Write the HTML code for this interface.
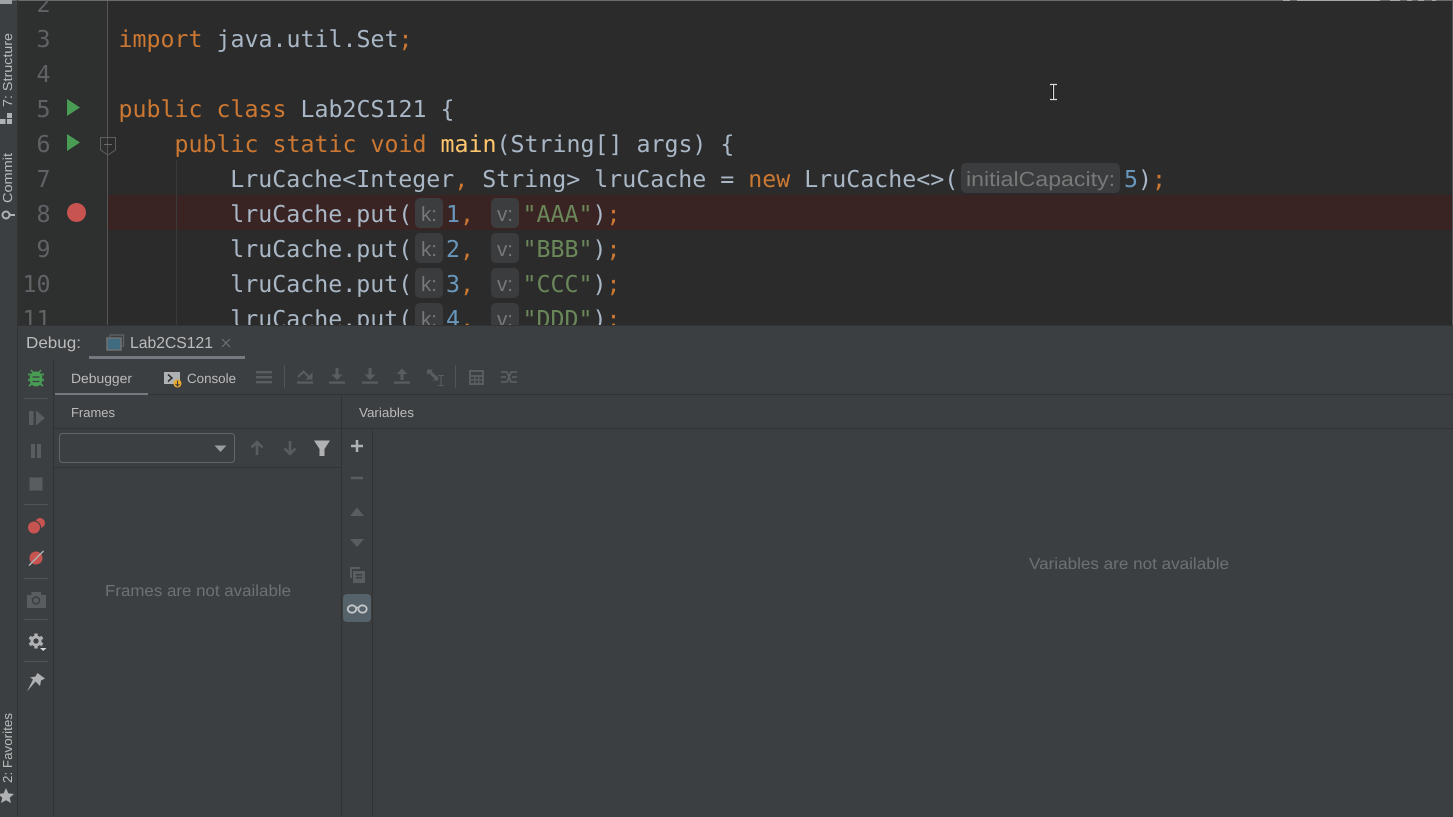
<!DOCTYPE html>
<html><head><meta charset="utf-8"><style>
html,body{margin:0;padding:0;background:#3c3f41;width:1453px;height:817px;overflow:hidden}
svg{display:block;text-rendering:geometricPrecision}
.c{font-family:"DejaVu Sans Mono","Liberation Mono",monospace;font-size:23.25px;white-space:pre}
.n{fill:#606366}.i{fill:#a9b7c6}.k{fill:#cc7832}.s{fill:#6a8759}.d{fill:#6897bb}.m{fill:#ffc66d}
.h{font-family:"Liberation Sans",sans-serif;font-size:20.5px;fill:#787878}
.u{font-family:"Liberation Sans",sans-serif;fill:#bbbbbb}
.g{fill:#5a5d5f}.a{fill:#afb1b3}
</style></head><body>
<svg width="1453" height="817" viewBox="0 0 1453 817" xmlns="http://www.w3.org/2000/svg">
<rect width="1453" height="817" fill="#3c3f41"/>
<rect x="18" y="0" width="1435" height="326" fill="#2b2b2b"/>
<rect x="18" y="0" width="89" height="326" fill="#2e2f2f"/>
<rect x="107" y="195" width="1346" height="35" fill="#3a2323"/>
<rect x="107" y="0" width="1" height="326" fill="#555555"/>
<rect x="176" y="160" width="1" height="166" fill="#3b3b3b"/>
<rect x="18" y="0" width="1" height="326" fill="#323232"/>
<rect x="0" y="0" width="1453" height="1" fill="#6b6b6b"/>
<path d="M1283 0.500H1290M1297 0.500H1380M1390 0.500H1400M1407 0.500H1412M1418 0.500H1424M1432 0.500H1436" stroke="#a8a8a8" stroke-width="1"/>
<rect x="1452" y="0" width="1" height="326" fill="#555"/>
<rect x="0" y="0" width="12" height="4" fill="#a0a2a4"/>

<g class="c n" text-anchor="end">
<text x="50.500" y="12">2</text><text x="50.500" y="47">3</text><text x="50.500" y="82">4</text><text x="50.500" y="117">5</text><text x="50.500" y="152">6</text><text x="50.500" y="187">7</text><text x="50.500" y="222">8</text><text x="50.500" y="257">9</text><text x="50.500" y="292">10</text><text x="50.500" y="327">11</text>
</g>

<path d="M67 99L80 107.500L67 116Z" fill="#499c54"/>
<path d="M67 134L80 142.500L67 151Z" fill="#499c54"/>
<circle cx="76.500" cy="212.500" r="9.500" fill="#c75450"/>
<path d="M100.500 137.500H115.500V150L108 155L100.500 150Z" fill="none" stroke="#5f5f5f" stroke-width="1"/>
<path d="M104 144.500H112" stroke="#6a6a6a" stroke-width="1"/>

<text class="c" x="118.500" y="47" xml:space="preserve"><tspan class="k">import</tspan><tspan class="i"> java.util.Set</tspan><tspan class="k">;</tspan></text>
<text class="c" x="118.500" y="117" xml:space="preserve"><tspan class="k">public class</tspan><tspan class="i"> Lab2CS121 {</tspan></text>
<text class="c" x="174.500" y="152" xml:space="preserve"><tspan class="k">public static void</tspan><tspan class="i"> </tspan><tspan class="m">main</tspan><tspan class="i">(String[] args) {</tspan></text>
<text class="c" x="230.300" y="187" xml:space="preserve"><tspan class="i">LruCache&lt;Integer</tspan><tspan class="k">,</tspan><tspan class="i"> String&gt; lruCache = </tspan><tspan class="k">new</tspan><tspan class="i"> LruCache&lt;&gt;(</tspan></text>
<rect x="961" y="163" width="159" height="30" rx="5" fill="#3a3c3d"/>
<text class="h" x="966" y="186" textLength="149" lengthAdjust="spacingAndGlyphs">initialCapacity:</text>
<text class="c" x="1124" y="187" xml:space="preserve"><tspan class="d">5</tspan><tspan class="i">)</tspan><tspan class="k">;</tspan></text>

<g>
<text class="c i" x="230.300" y="222">lruCache.put(</text>
<rect x="415" y="198" width="28" height="30" rx="5" fill="#3c3d3f"/>
<text class="h" x="421" y="221" textLength="16" lengthAdjust="spacingAndGlyphs">k:</text>
<text class="c" x="446" y="222" xml:space="preserve"><tspan class="d">1</tspan><tspan class="k">,</tspan></text>
<rect x="491" y="198" width="28" height="30" rx="5" fill="#3c3d3f"/>
<text class="h" x="497" y="221" textLength="16" lengthAdjust="spacingAndGlyphs">v:</text>
<text class="c" x="522.500" y="222" xml:space="preserve"><tspan class="s">"AAA"</tspan><tspan class="i">)</tspan><tspan class="k">;</tspan></text>
</g>
<g>
<text class="c i" x="230.300" y="257">lruCache.put(</text>
<rect x="415" y="233" width="28" height="30" rx="5" fill="#3a3c3d"/>
<text class="h" x="421" y="256" textLength="16" lengthAdjust="spacingAndGlyphs">k:</text>
<text class="c" x="446" y="257" xml:space="preserve"><tspan class="d">2</tspan><tspan class="k">,</tspan></text>
<rect x="491" y="233" width="28" height="30" rx="5" fill="#3a3c3d"/>
<text class="h" x="497" y="256" textLength="16" lengthAdjust="spacingAndGlyphs">v:</text>
<text class="c" x="522.500" y="257" xml:space="preserve"><tspan class="s">"BBB"</tspan><tspan class="i">)</tspan><tspan class="k">;</tspan></text>
</g>
<g>
<text class="c i" x="230.300" y="292">lruCache.put(</text>
<rect x="415" y="268" width="28" height="30" rx="5" fill="#3a3c3d"/>
<text class="h" x="421" y="291" textLength="16" lengthAdjust="spacingAndGlyphs">k:</text>
<text class="c" x="446" y="292" xml:space="preserve"><tspan class="d">3</tspan><tspan class="k">,</tspan></text>
<rect x="491" y="268" width="28" height="30" rx="5" fill="#3a3c3d"/>
<text class="h" x="497" y="291" textLength="16" lengthAdjust="spacingAndGlyphs">v:</text>
<text class="c" x="522.500" y="292" xml:space="preserve"><tspan class="s">"CCC"</tspan><tspan class="i">)</tspan><tspan class="k">;</tspan></text>
</g>
<g>
<text class="c i" x="230.300" y="327">lruCache.put(</text>
<rect x="415" y="303" width="28" height="30" rx="5" fill="#3a3c3d"/>
<text class="h" x="421" y="326" textLength="16" lengthAdjust="spacingAndGlyphs">k:</text>
<text class="c" x="446" y="327" xml:space="preserve"><tspan class="d">4</tspan><tspan class="k">,</tspan></text>
<rect x="491" y="303" width="28" height="30" rx="5" fill="#3a3c3d"/>
<text class="h" x="497" y="326" textLength="16" lengthAdjust="spacingAndGlyphs">v:</text>
<text class="c" x="522.500" y="327" xml:space="preserve"><tspan class="s">"DDD"</tspan><tspan class="i">)</tspan><tspan class="k">;</tspan></text>
</g>

<!-- caret I-beam -->
<path d="M1050 84.500H1057M1050 99.500H1057M1053.500 85V99" stroke="#ddd" stroke-width="1.200" fill="none"/>
<path d="M1052.500 85V99" stroke="#111" stroke-width="1" fill="none"/>

<!-- debug panel -->
<rect x="18" y="325" width="1435" height="492" fill="#3c3f41"/>
<rect x="18" y="325" width="1435" height="1" fill="#323232"/>
<rect x="0" y="1" width="17" height="816" fill="#3c3f41"/>
<rect x="0" y="0" width="12" height="4" fill="#a0a2a4"/>
<rect x="17" y="0" width="1" height="817" fill="#323232"/>
<rect x="53" y="360" width="1" height="457" fill="#323232"/>
<rect x="54" y="394" width="1399" height="1" fill="#323232"/>
<rect x="54" y="428" width="1399" height="1" fill="#323232"/>
<rect x="54" y="467" width="287" height="1" fill="#323232"/>
<rect x="341" y="395" width="1" height="422" fill="#323232"/>
<rect x="372" y="429" width="1" height="388" fill="#323232"/>

<text class="u" x="26" y="348" font-size="16" textLength="55" lengthAdjust="spacingAndGlyphs">Debug:</text>
<path d="M110 337V335H123.500V346H121" fill="none" stroke="#5f6365" stroke-width="1.300"/>
<rect x="107" y="338" width="14" height="12" fill="#3f6a80" stroke="#6e7173" stroke-width="1.500"/>
<text class="u" x="130" y="348" font-size="16" textLength="83" lengthAdjust="spacingAndGlyphs">Lab2CS121</text>
<path d="M222 339L230 347M230 339L222 347" stroke="#6e7173" stroke-width="1.200"/>
<rect x="89" y="356" width="156" height="3" fill="#747a80"/>

<text class="u" x="71" y="383" font-size="13.500" textLength="61" lengthAdjust="spacingAndGlyphs">Debugger</text>
<rect x="55" y="393" width="93" height="2" fill="#747a80"/>
<rect x="164" y="372" width="16" height="12" fill="#afb1b3"/>
<path d="M168 374.500L172 378L168 381.500" stroke="#2b2b2b" stroke-width="1.500" fill="none"/>
<circle cx="177.500" cy="383.500" r="4" fill="#eaa92a"/>
<path d="M177.500 380.500V385.500M175.500 384L177.500 386L179.500 384" stroke="#3c3f41" stroke-width="1" fill="none"/>
<text class="u" x="187" y="383" font-size="13.500" textLength="49" lengthAdjust="spacingAndGlyphs">Console</text>

<!-- toolbar -->
<g class="g">
<rect x="256" y="371" width="16" height="2.400"/><rect x="256" y="376" width="16" height="2.400"/><rect x="256" y="381" width="16" height="2.400"/>
<rect x="284" y="365" width="1" height="23" fill="#515456"/>
<rect x="297" y="381.500" width="16" height="2.200"/>
<rect x="329" y="381.500" width="16" height="2.200"/><path d="M335.500 368H338.500V374.500H342.500L337 380L331.500 374.500H335.500Z"/>
<rect x="362" y="381.500" width="16" height="2.200"/><path d="M368.500 368H371.500V374.500H375.500L370 380L364.500 374.500H368.500Z"/>
<rect x="394" y="381.500" width="16" height="2.200"/><path d="M400.500 380H403.500V374H407.500L402 368.500L396.500 374H400.500Z"/>
<path d="M427 369.500H433L431.500 371.500L438 377.500V373L438.500 380.500H430.500L435 379.500L429 373L427 375Z"/>
<rect x="455" y="365" width="1" height="23" fill="#515456"/>
<path fill-rule="evenodd" d="M469 370H484V385H469ZM471 372V375H482V372ZM471 377V379H474V377ZM475.500 377V379H478V377ZM479.500 377V379H482V377ZM471 380.500V383H474V380.500ZM475.500 380.500V383H478V380.500ZM479.500 380.500V383H482V380.500Z"/>
</g>
<path d="M298 377L303.500 371.500L309 377" stroke="#5a5d5f" stroke-width="2" fill="none"/>
<path d="M312.500 372.500V379.500H305.500Z" class="g"/>
<path d="M438 375.500H444M438 385.500H444M441 376V385" stroke="#5a5d5f" stroke-width="1.100" fill="none"/>
<path d="M501 372H507L511 382H517M501 382H507L511 372H517M501 377H506M512 377H517" stroke="#5a5d5f" stroke-width="1.800" fill="none"/>

<text class="u" x="71" y="417" font-size="13" textLength="44" lengthAdjust="spacingAndGlyphs">Frames</text>
<text class="u" x="359" y="417" font-size="13" textLength="55" lengthAdjust="spacingAndGlyphs">Variables</text>

<rect x="59.500" y="433.500" width="175" height="29" rx="3" fill="#3c3f41" stroke="#646464"/>
<path d="M214.500 445.500H226.500L220.500 452Z" fill="#9a9c9e"/>
<path d="M257 455V442M251.500 447.500L257 442L262.500 447.500" stroke="#5a5d5f" stroke-width="2.500" fill="none"/>
<path d="M290 441V454M284.500 448.500L290 454L295.500 448.500" stroke="#5a5d5f" stroke-width="2.500" fill="none"/>
<path d="M314 440.500H330L324.500 449V456H319.500V449Z" fill="#afb1b3"/>

<!-- left debug column -->
<path d="M31 370L33.500 373M41 370L38.500 373" stroke="#499c54" stroke-width="1.500"/>
<ellipse cx="36" cy="379" rx="6.500" ry="7.500" fill="#499c54"/>
<path d="M28 374.500H44M28 380H44M29 386L32 383.500M43 386L40 383.500" stroke="#499c54" stroke-width="1.800"/>
<path d="M32.500 377H39.500M32.500 381.500H39.500" stroke="#3c3f41" stroke-width="1.300"/>

<g fill="#515456"><rect x="24" y="398" width="24" height="1"/><rect x="24" y="504" width="24" height="1"/><rect x="24" y="578" width="24" height="1"/><rect x="24" y="619" width="24" height="1"/><rect x="24" y="661" width="24" height="1"/></g>
<g class="g">
<rect x="29" y="411" width="4.500" height="14"/><path d="M36 410.500L45 418L36 425.500Z"/>
<rect x="31" y="444" width="4" height="14"/><rect x="37" y="444" width="4" height="14"/>
<rect x="29.500" y="477.500" width="13" height="13"/>
</g>
<circle cx="40" cy="523" r="5" fill="#c75450"/>
<circle cx="34" cy="527.500" r="6.500" fill="#c75450" stroke="#3c3f41" stroke-width="1"/>
<circle cx="36" cy="558" r="6.500" fill="#c75450"/>
<path d="M29 565.500L43.500 551" stroke="#afb1b3" stroke-width="1.500"/>
<path d="M27 595H31.500V592H41V595H46V608H27Z" class="g"/>
<circle cx="36" cy="600.500" r="3.500" fill="none" stroke="#3c3f41" stroke-width="1.500"/>
<circle cx="36" cy="641" r="5.500" fill="#afb1b3"/>
<path d="M36 633.500V648.500M29.500 637.250L42.500 644.750M42.500 637.250L29.500 644.750" stroke="#afb1b3" stroke-width="3.400"/>
<circle cx="36" cy="641" r="2.600" fill="#3c3f41"/>
<path d="M40 648H46.500L43.250 651Z" fill="#d8d8d8"/>
<path d="M37.500 673L45 678.500L41 680.500L40 686L35.500 681.500L27 691.500L33 679.500L30 677.500L35.500 676.500Z" fill="#afb1b3"/>

<!-- side column -->
<path d="M357 440V452M351 446H363" stroke="#afb1b3" stroke-width="2.500"/>
<path d="M351 478H363" stroke="#5a5d5f" stroke-width="2.500"/>
<path d="M350 516H364L357 507.500Z" class="g"/>
<path d="M350 539H364L357 547Z" class="g"/>
<path d="M350 567H360V569H352V578H350Z" class="g"/>
<path fill-rule="evenodd" d="M353 571H365V583H353ZM356 574V575.500H362V574ZM356 577V578.500H362V577Z" class="g"/>
<rect x="343" y="594" width="28" height="28" rx="4" fill="#566269"/>
<ellipse cx="352" cy="609" rx="4.200" ry="3.700" fill="none" stroke="#c5c8ca" stroke-width="1.800"/>
<ellipse cx="362.500" cy="609" rx="4.200" ry="3.700" fill="none" stroke="#c5c8ca" stroke-width="1.800"/>
<path d="M356 607.500H358.500" stroke="#c5c8ca" stroke-width="1.500" fill="none"/>

<text x="198" y="596" text-anchor="middle" font-family="Liberation Sans, sans-serif" font-size="16" fill="#6e7173" textLength="186" lengthAdjust="spacingAndGlyphs">Frames are not available</text>
<text x="1129" y="569" text-anchor="middle" font-family="Liberation Sans, sans-serif" font-size="16" fill="#6e7173" textLength="200" lengthAdjust="spacingAndGlyphs">Variables are not available</text>

<!-- left strip -->
<text class="u" font-size="13" transform="translate(12,107) rotate(-90)" textLength="74" lengthAdjust="spacingAndGlyphs">7: Structure</text>
<g fill="#afb1b3"><rect x="7" y="113" width="5" height="5"/><rect x="0" y="119" width="5.500" height="5"/><rect x="7" y="119" width="5" height="5"/></g>
<text class="u" font-size="13" transform="translate(12,203) rotate(-90)" textLength="50" lengthAdjust="spacingAndGlyphs">Commit</text>
<circle cx="6" cy="215" r="3.500" fill="none" stroke="#afb1b3" stroke-width="2"/>
<path d="M10 215H15" stroke="#afb1b3" stroke-width="2"/>
<text class="u" font-size="13" transform="translate(12,783) rotate(-90)" textLength="70" lengthAdjust="spacingAndGlyphs">2: Favorites</text>
<path d="M6 788L8.300 793.300L14 794L9.700 797.700L11 803L6 800.300L1 803L2.300 797.700L-2 794L3.700 793.300Z" fill="#afb1b3"/>
</svg>
</body></html>
